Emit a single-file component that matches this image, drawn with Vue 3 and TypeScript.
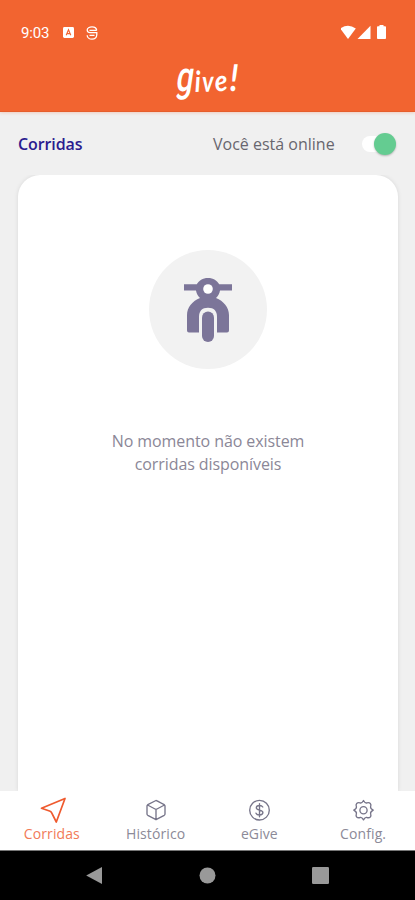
<script setup lang="ts">
import { ref } from 'vue'

type Tab = { id: string; label: string }
const tabs: Tab[] = [
  { id: 'rides', label: 'Corridas' },
  { id: 'history', label: 'Histórico' },
  { id: 'egive', label: 'eGive' },
  { id: 'config', label: 'Config.' },
]
const active = ref('rides')
const online = ref(true)
</script>

<template>
  <div class="screen">
    <header class="header">
      <div class="status">
        <span class="clock">9:03</span>
        <svg class="st-a" width="11" height="11" viewBox="0 0 11 11"><rect width="11" height="11" rx="1.4" fill="#fff" /><path d="M3.2 8.2 5.5 2.7 7.8 8.2M4 6.6H7" fill="none" stroke="#f26430" stroke-width="1.1" /></svg>
        <svg class="st-s" width="12" height="14" viewBox="0 0 12 14" fill="none" stroke="#fff" stroke-width="1.3"><path d="M10.700 4.300C10.500 2.200 8.500.8 6 .8S1.200 2.200 1.200 4.100C1.200 6 2.500 6.700 4 6.700H10.800V8.500C10.800 11.400 8.700 13.200 6 13.200S1.200 11.400 1.200 9.200M3.500 4.300H10.800M3.500 9.400H8.500" /></svg>
        <span class="grow"></span>
        <svg width="48" height="15" viewBox="0 0 48 15" fill="#fff"><path d="M-.8 3.500Q7-2 14.800 3.500L7 14Z" /><path d="M16.500 14 29.500 .8V14Z" /><path d="M38.500 0H42.500V1.300H44.200Q45 1.300 45 2.200V13.100Q45 14 44.200 14H36.800Q36 14 36 13.100V2.200Q36 1.300 36.800 1.300H38.500Z" /></svg>
      </div>
      <h1 class="logo">
        <svg width="72" height="50" viewBox="0 0 72 50" fill="#fff">
          <text class="g" transform="translate(3 31) scale(.72 1) skewX(-12)">g</text>
          <text class="s" transform="translate(23 32) rotate(-2) scale(.85 1)">i</text>
          <text class="s" transform="translate(30.500 32) rotate(-2) scale(.8 1)">v</text>
          <text class="s" transform="translate(43.500 31.500) rotate(-5) scale(.9 1)">e</text>
          <text class="x" transform="translate(57.500 31) scale(.85 1) skewX(-2)">!</text>
        </svg>
      </h1>
    </header>

    <div class="topbar">
      <h2>Corridas</h2>
      <span class="state">Você está online</span>
      <button class="switch" :class="{ off: !online }" aria-label="Online" @click="online = !online"><span class="thumb"></span></button>
    </div>

    <main class="content">
      <section class="card">
        <div class="disc">
          <svg width="50" height="64" viewBox="0 0 50 64">
            <g fill="#7c7599">
              <path d="M1 6.300H13.800C16 2.500 19.500 0 25 0S34 2.500 36.200 6.300H49V12.500H37C36.500 15.500 35 18 33 20C40.500 23 46 29.500 46 37V52.500Q46 54.500 44 54.500H34V39C34 33 31 29.800 25 29.800S16 33 16 39V54.500H6Q4 54.500 4 52.500V37C4 29.500 9.500 23 17 20C15 18 13.500 15.500 13 12.500H1Z" />
              <rect x="19" y="33.500" width="12" height="30.500" rx="6" />
            </g>
            <circle cx="25" cy="11" r="4.800" fill="#fff" />
          </svg>
        </div>
        <p>No momento não existem<br />corridas disponíveis</p>
      </section>
    </main>

    <nav class="tabs">
      <button v-for="t in tabs" :key="t.id" :class="['tab', t.id, { active: active === t.id }]" @click="active = t.id">
        <svg v-if="t.id === 'rides'" width="28" height="28" viewBox="0 0 28 28"><path d="M27 2.500 18.300 26 13.700 16.800Q13 15.500 11.500 15L3.500 12.200Z" stroke-width="1.700" /></svg>
        <svg v-else-if="t.id === 'history'" width="28" height="28" viewBox="0 0 28 28"><path d="M14 4.500 Q14.500 4.500 22.200 8.700Q23 9.200 23 10V18Q23 18.800 22.200 19.300L14 23.700 5.800 19.300Q5 18.800 5 18V10Q5 9.200 5.800 8.700ZM5.500 9 14 13.500 22.500 9M14 13.500V23.500" /></svg>
        <svg v-else-if="t.id === 'egive'" width="28" height="28" viewBox="0 0 28 28"><circle cx="14.500" cy="14.200" r="9.800" /><path d="M17.800 11C17.100 9.900 16 9.500 14.500 9.500C12.500 9.500 11.300 10.400 11.300 11.800C11.300 14.900 17.900 13.300 17.900 16.600C17.900 18.200 16.500 19 14.500 19C12.800 19 11.500 18.400 11 17.200M14.500 7.700V20.800" /></svg>
        <svg v-else width="28" height="28" viewBox="0 0 28 28"><path d="M14.500 4.500Q16.200 7.600 18 6.900Q20 6.200 21.300 7.400Q22.400 8.500 21.600 10.800Q21.200 12.400 24.200 14.200Q21.200 16 21.600 17.600Q22.400 19.900 21.300 21Q20 22.200 18 21.500Q16.200 20.800 14.500 23.900Q12.800 20.800 11 21.500Q9 22.200 7.700 21Q6.600 19.900 7.400 17.600Q7.800 16 4.800 14.200Q7.800 12.400 7.400 10.800Q6.600 8.500 7.700 7.400Q9 6.200 11 6.900Q12.800 7.600 14.500 4.500Z" /><circle cx="14.500" cy="14.200" r="3.600" /></svg>
        <span class="label">{{ t.label }}</span>
      </button>
    </nav>

    <footer class="system">
      <svg width="17" height="19" viewBox="0 0 17 19"><path d="M.2 9.500 16 1V18Z" /></svg>
      <svg width="17" height="17" viewBox="0 0 17 17"><circle cx="8.500" cy="8.500" r="8" /></svg>
      <svg width="17" height="17" viewBox="0 0 17 17"><rect width="17" height="17" rx="1.200" /></svg>
    </footer>
  </div>
</template>

<style>
body { margin: 0; }
</style>

<style scoped>
* { box-sizing: border-box; }
.screen { width: 415px; height: 900px; display: flex; flex-direction: column; overflow: hidden; background: #f0f0f0; font-family: "Open Sans", "Noto Sans", sans-serif; }
button { border: 0; background: none; padding: 0; font: inherit; }
.header { height: 112px; flex: none; background: #f26430; border-bottom: 1px solid #e65e2c; box-shadow: 0 1px 3px rgba(242, 100, 48, .25); color: #fff; }
.status { display: flex; align-items: center; height: 60px; padding: 5px 26px 0 21px; }
.clock { width: 42px; font: 15px Roboto, sans-serif; letter-spacing: -.2px; }
.st-s { margin-left: 12px; }
.grow { flex: 1; }
.logo { display: flex; justify-content: center; margin: 0; font-family: Lato, sans-serif; font-weight: 700; font-style: italic; }
.logo svg { overflow: visible; }
.logo .g { font-family: Roboto, sans-serif; font-style: normal; font-weight: 500; font-size: 42px; }
.logo .s { font-size: 29px; }
.logo .x { font-size: 37px; }
.topbar { display: flex; align-items: center; height: 63px; flex: none; padding: 1px 19px 0 18px; }
h2 { margin: 0; width: 195px; color: #2b1b8f; font-size: 16px; font-weight: 600; letter-spacing: -.1px; }
.state { width: 148px; color: #68666e; font-size: 16px; white-space: nowrap; }
.switch { position: relative; width: 35px; height: 24px; }
.switch::before { content: ""; display: block; width: 31px; height: 16px; margin-left: 1px; border-radius: 8px; background: #fff; }
.thumb { position: absolute; top: 1px; right: 0; width: 22px; height: 22px; border-radius: 50%; background: #64cc91; box-shadow: 0 1px 2px rgba(0, 0, 0, .25); }
.off .thumb { right: 13px; background: #ccc; }
.content { flex: 1; padding: 0 17px 0 18px; overflow: hidden; }
.card { height: 100%; display: flex; flex-direction: column; align-items: center; padding-top: 75px; border-radius: 22px 22px 0 0; background: #fff; box-shadow: 0 0 4px rgba(0, 0, 0, .1); }
.disc { display: flex; align-items: center; justify-content: center; width: 118px; height: 119px; padding-top: 1px; border-radius: 50%; background: #f2f2f2; }
.card p { margin: 61px 0 0; text-align: center; color: #8b8797; font-size: 16px; line-height: 23px; letter-spacing: -.08px; }
.tabs { display: grid; grid-template-columns: repeat(4, 1fr); height: 59px; flex: none; background: #fff; }
.tab { display: flex; flex-direction: column; align-items: center; padding-top: 5px; color: #77758a; font-size: 14px; line-height: 20px; }
.tab svg { fill: none; stroke: currentColor; stroke-width: 1.35; stroke-linejoin: round; stroke-linecap: round; }
.label { color: #8c8a98; letter-spacing: .1px; }
.tab.active { color: #ef5a2e; }
.active .label { color: #f27a58; }
.system { display: flex; align-items: center; justify-content: center; gap: 96px; height: 50px; flex: none; background: #000; border-top: 1px solid #777; }
.system svg { fill: #999; }
</style>
